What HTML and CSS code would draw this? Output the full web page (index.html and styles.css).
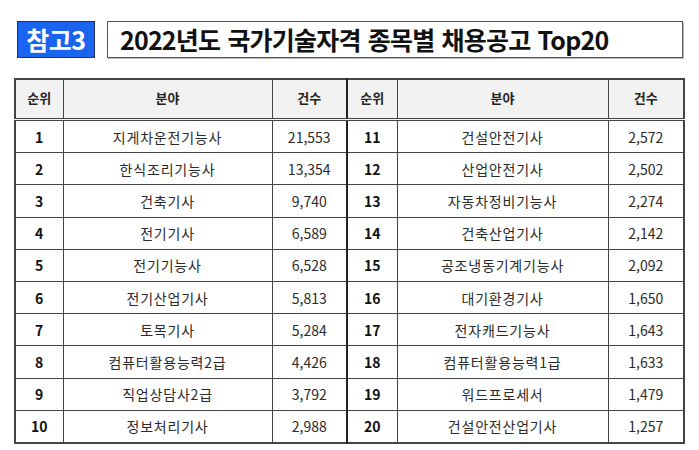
FILE: index.html
```html
<!DOCTYPE html>
<html lang="ko">
<head>
<meta charset="utf-8">
<link rel="stylesheet" href="styles.css">
</head>
<body>
<div class="page">
  <div class="heading">
    <div class="badge">참고3</div>
    <div class="title">2022년도 국가기술자격 종목별 채용공고 Top20</div>
  </div>
  <table class="rank">
    <colgroup>
      <col class="c-rank"><col class="c-field"><col class="c-count">
      <col class="c-rank2"><col class="c-field2"><col class="c-count2">
    </colgroup>
    <thead>
      <tr><th>순위</th><th>분야</th><th class="mid">건수</th><th>순위</th><th>분야</th><th>건수</th></tr>
    </thead>
    <tbody>
      <tr><td class="no">1</td><td class="name">지게차운전기능사</td><td class="mid">21,553</td><td class="no">11</td><td class="name">건설안전기사</td><td>2,572</td></tr>
      <tr><td class="no">2</td><td class="name">한식조리기능사</td><td class="mid">13,354</td><td class="no">12</td><td class="name">산업안전기사</td><td>2,502</td></tr>
      <tr><td class="no">3</td><td class="name">건축기사</td><td class="mid">9,740</td><td class="no">13</td><td class="name">자동차정비기능사</td><td>2,274</td></tr>
      <tr><td class="no">4</td><td class="name">전기기사</td><td class="mid">6,589</td><td class="no">14</td><td class="name">건축산업기사</td><td>2,142</td></tr>
      <tr><td class="no">5</td><td class="name">전기기능사</td><td class="mid">6,528</td><td class="no">15</td><td class="name">공조냉동기계기능사</td><td>2,092</td></tr>
      <tr><td class="no">6</td><td class="name">전기산업기사</td><td class="mid">5,813</td><td class="no">16</td><td class="name">대기환경기사</td><td>1,650</td></tr>
      <tr><td class="no">7</td><td class="name">토목기사</td><td class="mid">5,284</td><td class="no">17</td><td class="name">전자캐드기능사</td><td>1,643</td></tr>
      <tr><td class="no">8</td><td class="name">컴퓨터활용능력2급</td><td class="mid">4,426</td><td class="no">18</td><td class="name">컴퓨터활용능력1급</td><td>1,633</td></tr>
      <tr><td class="no">9</td><td class="name">직업상담사2급</td><td class="mid">3,792</td><td class="no">19</td><td class="name">워드프로세서</td><td>1,479</td></tr>
      <tr><td class="no">10</td><td class="name">정보처리기사</td><td class="mid">2,988</td><td class="no">20</td><td class="name">건설안전산업기사</td><td>1,257</td></tr>
    </tbody>
  </table>
</div>
</body>
</html>
```

FILE: styles.css
```css
html, body {
  margin: 0;
  padding: 0;
  background: #ffffff;
}
body {
  font-family: "Noto Sans CJK KR", "Noto Sans", sans-serif;
  color: #222;
}
.page {
  width: 699px;
  height: 450px;
  padding: 21px 16px 0 14px;
  box-sizing: border-box;
}
.heading {
  display: flex;
  gap: 12px;
  margin-left: 3px;
  height: 37px;
}
.badge {
  width: 78px;
  box-sizing: border-box;
  background: #1a64f0;
  border: 1px solid #1c2f6a;
  color: #fff;
  font-weight: 700;
  font-size: 25px;
  line-height: 34px;
  text-align: center;
  letter-spacing: -0.5px;
}
.title {
  flex: 1;
  box-sizing: border-box;
  border: 1px solid #555;
  box-shadow: 1px 1px 0 #bbb;
  font-weight: 700;
  font-size: 25px;
  line-height: 34px;
  padding-left: 12px;
  color: #111;
  letter-spacing: -0.8px;
  word-spacing: 1px;
}
.rank {
  margin-top: 20px;
  width: 669px;
  border-collapse: collapse;
  table-layout: fixed;
  border: 2px solid #444;
}
.c-rank { width: 48px; }
.c-field { width: 209px; }
.c-count { width: 75px; }
.c-rank2 { width: 50px; }
.c-field2 { width: 211px; }
.c-count2 { width: 76px; }
.rank th, .rank td {
  border: 1px solid #444;
  text-align: center;
  padding: 0;
  white-space: nowrap;
}
.rank th {
  background: #f2f2f2;
  height: 35px;
  font-size: 13px;
  font-weight: 700;
  color: #222;
  border-bottom: 3px double #444;
  padding-bottom: 3px;
}
.rank td {
  height: 31.2px;
  font-size: 14px;
  color: #2a2a2a;
}
.rank td.name {
  letter-spacing: 0.8px;
}
.rank td.no {
  font-weight: 700;
  font-size: 14px;
  color: #111;
}
.rank .mid {
  border-right: 2px solid #222;
}
```
